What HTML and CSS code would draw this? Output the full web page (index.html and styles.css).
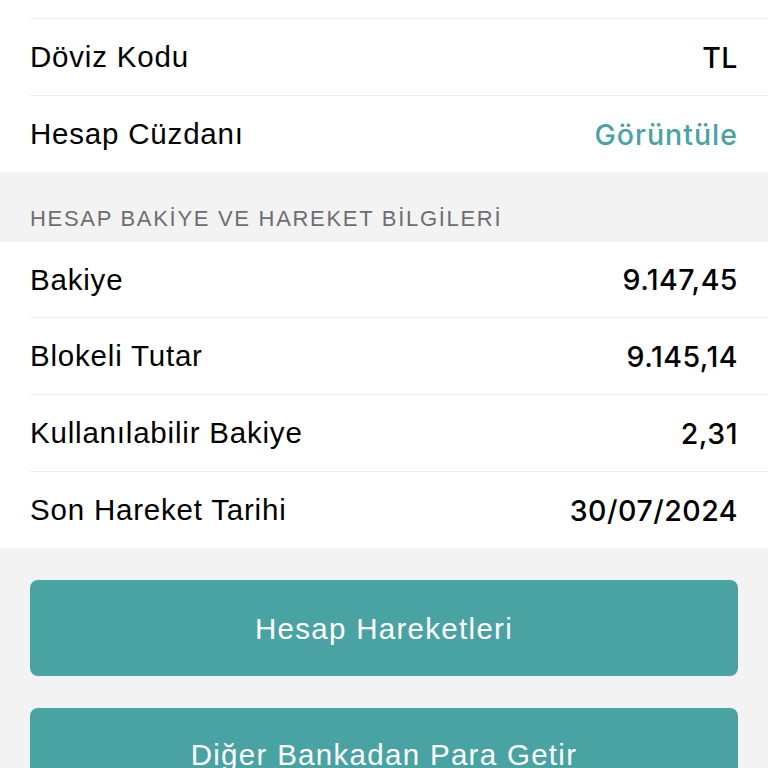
FILE: index.html
```html
<!DOCTYPE html>
<html lang="tr">
<head>
<meta charset="utf-8">
<link rel="stylesheet" href="styles.css">
</head>
<body>
<div class="screen">
  <div class="group">
    <div class="row row-partial"></div>
    <div class="row"><span class="label">Döviz Kodu</span><span class="value">TL</span></div>
    <div class="row"><span class="label">Hesap Cüzdanı</span><span class="link">Görüntüle</span></div>
  </div>
  <div class="section-header">HESAP BAKİYE VE HAREKET BİLGİLERİ</div>
  <div class="group">
    <div class="row row-first"><span class="label">Bakiye</span><span class="value">9.147,45</span></div>
    <div class="row"><span class="label">Blokeli Tutar</span><span class="value">9.145,14</span></div>
    <div class="row"><span class="label">Kullanılabilir Bakiye</span><span class="value">2,31</span></div>
    <div class="row"><span class="label">Son Hareket Tarihi</span><span class="value">30/07/2024</span></div>
  </div>
  <div class="actions">
    <button class="btn">Hesap Hareketleri</button>
    <button class="btn">Diğer Bankadan Para Getir</button>
  </div>
</div>
</body>
</html>
```
FILE: styles.css
```css
html, body {
  margin: 0;
  padding: 0;
  background: #f3f3f3;
}
body {
  font-family: "Liberation Sans", Arial, sans-serif;
  color: #000;
}
.screen {
  width: 768px;
  height: 768px;
  overflow: hidden;
}
.group {
  background: #fff;
  padding-left: 30px;
}
.row {
  height: 76px;
  display: flex;
  align-items: center;
  justify-content: space-between;
  padding-right: 30px;
  border-top: 1px solid #efefef;
}
.row-partial {
  height: 18px;
  border-top: none;
}
.row-first {
  height: 75px;
  border-top: none;
}
.label {
  font-size: 29.5px;
  letter-spacing: 0.8px;
}
.value {
  font-family: Inter, "Liberation Sans", sans-serif;
  font-size: 28.5px;
  font-weight: 500;
  letter-spacing: 0.5px;
}
.link {
  font-family: Inter, "Liberation Sans", sans-serif;
  font-size: 28.5px;
  font-weight: 500;
  letter-spacing: 1px;
  color: #4aa3a3;
}
.section-header {
  height: 70px;
  box-sizing: border-box;
  padding: 34px 0 0 30px;
  font-size: 22px;
  letter-spacing: 1.7px;
  color: #6d6d72;
}
.actions {
  display: flex;
  flex-direction: column;
  gap: 32px;
  padding: 32px 30px 0;
}
.btn {
  height: 96px;
  border: none;
  border-radius: 8px;
  background: #4aa3a3;
  color: #fff;
  font-family: "Liberation Sans", Arial, sans-serif;
  font-size: 29.5px;
  letter-spacing: 1.3px;
  padding: 0 0 2px;
  line-height: 1;
}
.btn:first-child {
  padding-top: 4px;
}
```
